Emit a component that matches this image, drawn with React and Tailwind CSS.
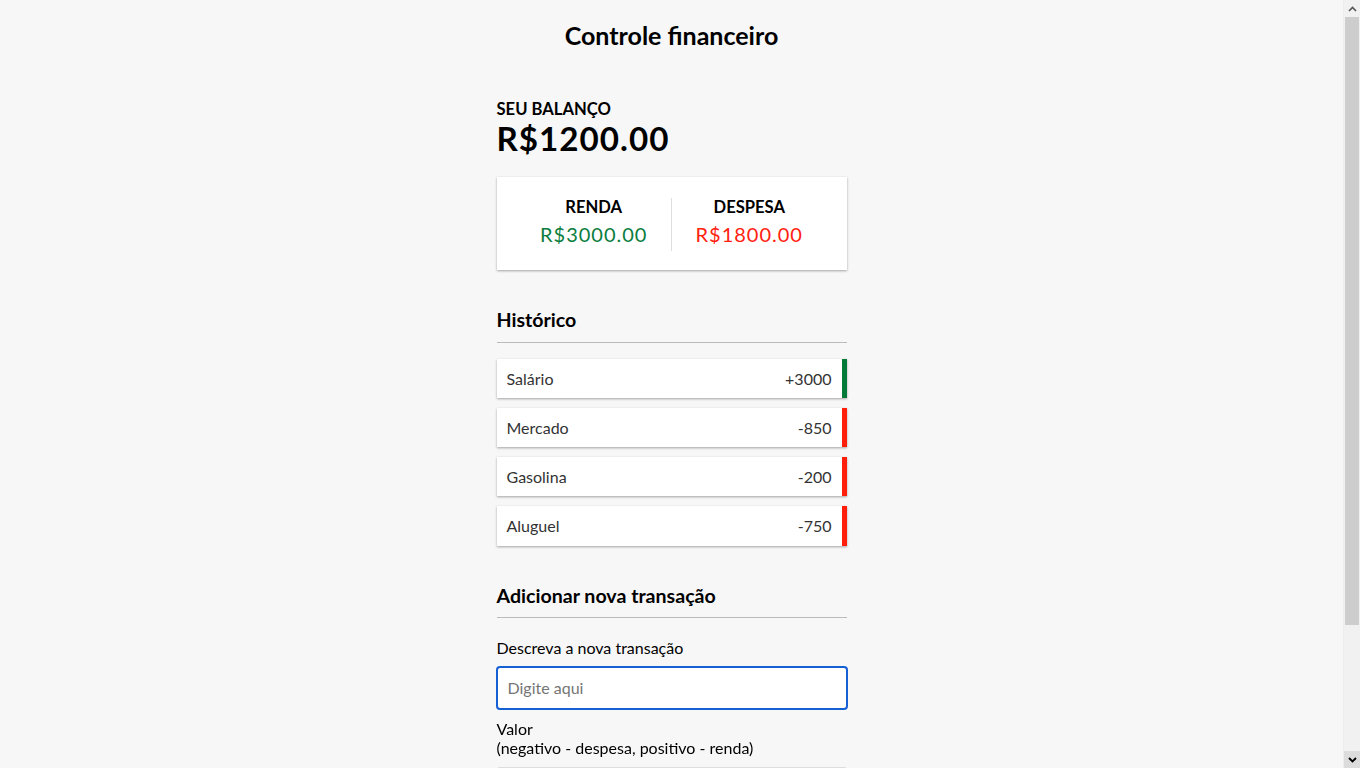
import React from "react";

const shadow = "shadow-[0_1px_3px_rgba(0,0,0,0.12),0_1px_2px_rgba(0,0,0,0.24)]";

const items = [
  { name: "Salário", value: "+3000", plus: true },
  { name: "Mercado", value: "-850", plus: false },
  { name: "Gasolina", value: "-200", plus: false },
  { name: "Aluguel", value: "-750", plus: false },
];

function Scrollbar() {
  return (
    <div className="w-[17px] shrink-0 h-full flex flex-col bg-[#f1f1f1] border-l border-[#ededed]">
      <div className="h-[17px] flex items-center justify-center">
        <svg width="9" height="6" viewBox="0 0 9 6">
          <path d="M1 5 L4.5 1.5 L8 5" fill="none" stroke="#555" strokeWidth="1.6" />
        </svg>
      </div>
      <div className="h-[608px] mx-[1px] bg-[#cdcdcd]" />
      <div className="flex-1" />
      <div className="h-[17px] flex items-center justify-center bg-[#dcdcdc]">
        <svg width="9" height="6" viewBox="0 0 9 6">
          <path d="M1 1 L4.5 4.5 L8 1" fill="none" stroke="#000" strokeWidth="1.8" />
        </svg>
      </div>
    </div>
  );
}

export default function App() {
  return (
    <div className="h-screen flex overflow-hidden bg-[#f7f7f7] font-['Lato','Noto_Sans',sans-serif] leading-[1.2] text-black">
      <main className="flex-1 min-w-0 overflow-hidden flex flex-col items-center">
        <h2 className="text-[25px] leading-[30px] font-bold mt-[20px] mb-[18.6px]">Controle financeiro</h2>
        <div className="w-[350px] mt-[31px] mb-[30px]">
          <h4 className="text-[16.6px] leading-[19.2px] font-bold uppercase">Seu balanço</h4>
          <h1 className="text-[33.2px] leading-[38.4px] font-bold tracking-[1px]">R$1200.00</h1>

          <div className={`bg-white ${shadow} pt-[21px] pb-[19px] px-5 flex justify-between my-5`}>
            <div className="flex-1 text-center border-r border-[#dedede]">
              <h4 className="text-[16.6px] leading-[19.2px] font-bold uppercase">Renda</h4>
              <p className="text-[20px] leading-[24px] tracking-[1px] my-[5px] text-[#0b7d3e]">R$3000.00</p>
            </div>
            <div className="flex-1 text-center">
              <h4 className="text-[16.6px] leading-[19.2px] font-bold uppercase">Despesa</h4>
              <p className="text-[20px] leading-[24px] tracking-[1px] my-[5px] text-[#ff2211]">R$1800.00</p>
            </div>
          </div>

          <h3 className="text-[19.6px] font-bold border-b border-[#bbb] pb-[10px] mt-[38px] mb-[16px]">Histórico</h3>
          <ul className="flex flex-col gap-[10px] mb-[38px]">
            {items.map((it) => (
              <li
                key={it.name}
                className={`bg-white ${shadow} text-[#333] text-[16px] flex justify-between p-[10px] border-r-[5px] ${
                  it.plus ? "border-[#007a36]" : "border-[#ff1e0a]"
                }`}
              >
                <span>{it.name}</span>
                <span>{it.value}</span>
              </li>
            ))}
          </ul>

          <h3 className="text-[19.6px] font-bold border-b border-[#bbb] pb-[10px] mt-[38px] mb-[10px]">Adicionar nova transação</h3>
          <form onSubmit={(e) => e.preventDefault()}>
            <div>
              <label className="inline-block my-[10px] text-[16px]">Descreva a nova transação</label>
              <input
                type="text"
                autoFocus
                placeholder="Digite aqui"
                className="block w-full border border-[#dedede] rounded-[3px] text-[16px] p-[10px] bg-white outline-2 outline-solid outline-[#1660d6] -outline-offset-1 placeholder:text-[#757575]"
              />
            </div>
            <div>
              <label className="inline-block my-[10px] text-[16px]">
                Valor <br />
                (negativo - despesa, positivo - renda)
              </label>
              <input
                type="number"
                placeholder="Digite o valor"
                className="block w-full border border-[#dedede] rounded-[2px] text-[16px] p-[10px] bg-white outline-none placeholder:text-[#757575]"
              />
            </div>
            <button className={`block w-full ${shadow} bg-[#007a36] text-white text-[16px] p-[10px] mt-[10px] mb-[30px]`}>
              Adicionar
            </button>
          </form>
        </div>
      </main>
      <Scrollbar />
    </div>
  );
}
